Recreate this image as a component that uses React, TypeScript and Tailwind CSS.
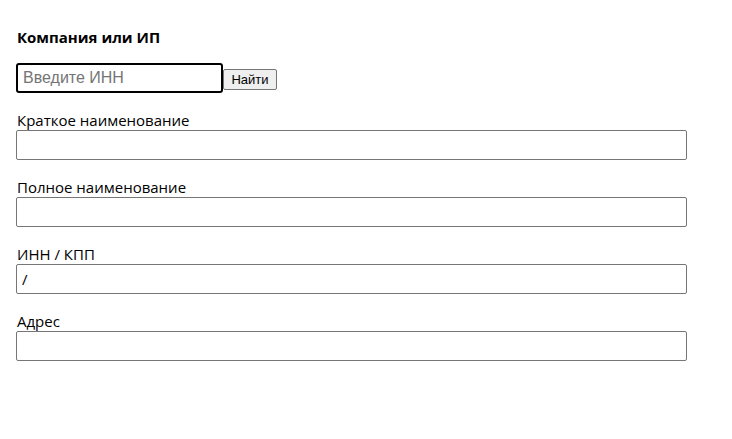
import React from "react";

const fields = [
  { label: "Краткое наименование", value: "" },
  { label: "Полное наименование", value: "" },
  { label: "ИНН / КПП", value: "/" },
  { label: "Адрес", value: "" },
];

export default function App() {
  return (
    <div className="w-[732px] h-[439px] bg-white pl-4 pt-[27px] font-['Open_Sans','Noto_Sans',sans-serif]">
      <div className="text-[15px] font-bold text-black leading-[20px] pl-px">Компания или ИП</div>
      <div className="mt-[16px] flex items-center h-[30px] font-['Liberation_Sans',Arial,sans-serif]">
        <input
          placeholder="Введите ИНН"
          className="w-[207px] h-[30px] border-2 border-black rounded-[3px] px-[5px] text-[16px] text-black placeholder:text-[#757575] outline-none font-['Liberation_Sans',Arial,sans-serif]"
        />
        <button className="w-[54px] h-[21px] mt-[2px] bg-[#efefef] border border-[#767676] rounded-[2px] text-[13px] text-black leading-none">
          Найти
        </button>
      </div>
      <div className="mt-[17px] flex flex-col gap-[17px]">
        {fields.map((f) => (
          <div key={f.label} className="flex flex-col">
            <label className="text-[15px] leading-[20px] text-black pl-px">{f.label}</label>
            <input
              readOnly
              value={f.value}
              className="w-[671px] h-[30px] border border-[#767676] rounded-[2px] px-[5px] text-[15px] text-black outline-none font-['Open_Sans','Noto_Sans',sans-serif]"
            />
          </div>
        ))}
      </div>
    </div>
  );
}
